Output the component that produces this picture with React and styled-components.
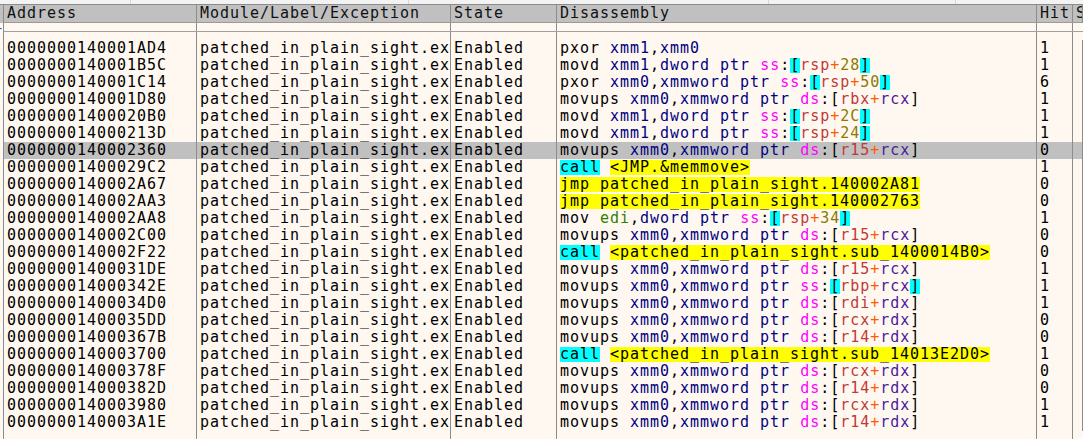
import React from 'react'
import styled, { createGlobalStyle } from 'styled-components'

const GlobalStyle = createGlobalStyle`
  html, body {
    margin: 0;
    padding: 0;
    background: #fff8f0;
    overflow: hidden;
  }
`

const rows = [
    ['0000000140001AD4', 'pxor xmm1,xmm0', '1'],
    ['0000000140001B5C', 'movd xmm1,dword ptr ss:[rsp+28]', '1'],
    ['0000000140001C14', 'pxor xmm0,xmmword ptr ss:[rsp+50]', '6'],
    ['0000000140001D80', 'movups xmm0,xmmword ptr ds:[rbx+rcx]', '1'],
    ['00000001400020B0', 'movd xmm1,dword ptr ss:[rsp+2C]', '1'],
    ['000000014000213D', 'movd xmm1,dword ptr ss:[rsp+24]', '1'],
    ['0000000140002360', 'movups xmm0,xmmword ptr ds:[r15+rcx]', '0', true],
    ['00000001400029C2', 'call <JMP.&memmove>', '1'],
    ['0000000140002A67', 'jmp patched_in_plain_sight.140002A81', '0'],
    ['0000000140002AA3', 'jmp patched_in_plain_sight.140002763', '0'],
    ['0000000140002AA8', 'mov edi,dword ptr ss:[rsp+34]', '1'],
    ['0000000140002C00', 'movups xmm0,xmmword ptr ds:[r15+rcx]', '0'],
    ['0000000140002F22', 'call <patched_in_plain_sight.sub_1400014B0>', '0'],
    ['00000001400031DE', 'movups xmm0,xmmword ptr ds:[r15+rcx]', '1'],
    ['000000014000342E', 'movups xmm0,xmmword ptr ss:[rbp+rcx]', '1'],
    ['00000001400034D0', 'movups xmm0,xmmword ptr ds:[rdi+rdx]', '1'],
    ['00000001400035DD', 'movups xmm0,xmmword ptr ds:[rcx+rdx]', '0'],
    ['000000014000367B', 'movups xmm0,xmmword ptr ds:[r14+rdx]', '0'],
    ['0000000140003700', 'call <patched_in_plain_sight.sub_14013E2D0>', '1'],
    ['000000014000378F', 'movups xmm0,xmmword ptr ds:[rcx+rdx]', '0'],
    ['000000014000382D', 'movups xmm0,xmmword ptr ds:[r14+rdx]', '0'],
    ['0000000140003980', 'movups xmm0,xmmword ptr ds:[rcx+rdx]', '1'],
    ['0000000140003A1E', 'movups xmm0,xmmword ptr ds:[r14+rdx]', '1'],
]

const colors = {
    mn: '#000000',
    reg: '#000080',
    gen: '#2f8000',
    size: '#000080',
    seg: '#ff00ff',
    punct: '#000000',
    base: '#c03838',
    plus: '#ff5a00',
    idx: '#4a1a9a',
    num: '#8c7a00',
}

// split an instruction into coloured tokens
const tokenize = (ins) => {
    const sp = ins.indexOf(' ')
    const mn = ins.slice(0, sp)
    const rest = ins.slice(sp + 1)
    if (mn === 'call') return [['call', 'cyan'], [' ', 'punct'], [rest, 'yellow']]
    if (mn === 'jmp') return [[ins, 'yellow']]
    const out = [[mn, 'mn'], [' ', 'punct']]
    const parts = rest.match(/\w+|[^\w]/g)
    let seg = ''
    let inMem = false
    let n = 0
    parts.forEach((t) => {
        if (t === 'ss' || t === 'ds') { seg = t; out.push([t, 'seg']) }
        else if (t === '[' || t === ']') {
            inMem = t === '['
            n = 0
            out.push([t, seg === 'ss' ? 'stack' : 'punct'])
        }
        else if (t === '+') out.push([t, 'plus'])
        else if (t === ',' || t === ':' || t === ' ') out.push([t, 'punct'])
        else if (inMem) {
            if (/^[0-9A-F]+$/.test(t)) out.push([t, 'num'])
            else out.push([t, n++ === 0 ? 'base' : 'idx'])
        }
        else if (t === 'edi') out.push([t, 'gen'])
        else if (t === 'dword' || t === 'xmmword' || t === 'ptr') out.push([t, 'size'])
        else out.push([t, 'reg'])
    })
    return out
}

const Disasm = ({ ins }) => (
    <>
        {tokenize(ins).map(([t, k], i) => {
            if (k === 'cyan' || k === 'stack') return <Mark key={i} $bg='#00ffff'>{t}</Mark>
            if (k === 'yellow') return <Mark key={i} $bg='#ffff00'>{t}</Mark>
            return <Tok key={i} $c={colors[k]}>{t}</Tok>
        })}
    </>
)

const App = () => {
    return (
        <Window>
            <GlobalStyle />
            <TopStrip>
                <Tick style={{ left: 130 }} />
                <Tick style={{ left: 408 }} />
                <Tick style={{ left: 768 }} />
                <Tick style={{ left: 955 }} />
            </TopStrip>
            <Frame>
                <Gutter>
                    <GutterHead />
                    <GutterMark>r</GutterMark>
                </Gutter>
                <Table>
                    <Header>
                        <HeadCell>Address</HeadCell>
                        <HeadCell>Module/Label/Exception</HeadCell>
                        <HeadCell>State</HeadCell>
                        <HeadCell>Disassembly</HeadCell>
                        <HeadCell>Hit</HeadCell>
                        <HeadCell>S</HeadCell>
                    </Header>
                    <Spacer $line />
                    <Spacer />
                    {rows.map(([addr, ins, hit, sel]) => (
                        <Row key={addr} $sel={sel}>
                            <Cell>{addr}</Cell>
                            <Cell>patched_in_plain_sight.exe</Cell>
                            <Cell>Enabled</Cell>
                            <Cell><Disasm ins={ins} /></Cell>
                            <Cell>{hit}</Cell>
                            <Cell />
                        </Row>
                    ))}
                    <Spacer />
                </Table>
            </Frame>
        </Window>
    )
}

const cols = '193px 254px 106px 480px 36px 1fr'

const Window = styled.div`
    width: 1083px;
    height: 439px;
    overflow: hidden;
    background: #fff8f0;
    font-family: "DejaVu Sans Mono", "Liberation Mono", monospace;
    font-size: 15px;
    letter-spacing: 0.97px;
    color: #000;
`

const TopStrip = styled.div`
    position: relative;
    height: 4px;
    background: #f3f3f3;
`

const Tick = styled.span`
    position: absolute;
    top: 0;
    width: 1px;
    height: 4px;
    background: #d8d8d8;
`

const Frame = styled.div`
    display: flex;
`

const Gutter = styled.div`
    width: 3px;
    flex: none;
    display: flex;
    flex-direction: column;
`

const GutterHead = styled.div`
    height: 18px;
    background: #c0c0c0;
    border-top: 1px solid #8c8c8c;
`

const GutterMark = styled.div`
    color: #1a5fb4;
    font-size: 12px;
    line-height: 12px;
    overflow: hidden;
    direction: rtl;
    margin-top: 2px;
`

const Table = styled.div`
    flex: 1;
    border-left: 1px solid #8c8c8c;
`

const Header = styled.div`
    display: grid;
    grid-template-columns: ${cols};
    height: 17px;
    line-height: 17px;
    background: #c0c0c0;
    border-top: 1px solid #8c8c8c;
    border-bottom: 1px solid #9a9a9a;
`

const HeadCell = styled.div`
    padding-left: 3px;
    border-right: 1px solid #8c8c8c;
    white-space: nowrap;
    overflow: hidden;
    color: #101010;
`

const Spacer = styled.div`
    display: grid;
    grid-template-columns: ${cols};
    height: 8px;
    border-bottom: ${(p) => (p.$line ? '1px solid #a0a0a0' : 'none')};
    background-image: linear-gradient(#8c8c8c, #8c8c8c), linear-gradient(#8c8c8c, #8c8c8c),
        linear-gradient(#8c8c8c, #8c8c8c), linear-gradient(#8c8c8c, #8c8c8c),
        linear-gradient(#8c8c8c, #8c8c8c);
    background-size: 1px 100%;
    background-repeat: no-repeat;
    background-position: 192px 0, 446px 0, 552px 0, 1032px 0, 1068px 0;
`

const Row = styled.div`
    display: grid;
    grid-template-columns: ${cols};
    height: 17px;
    line-height: 17px;
    background: ${(p) => (p.$sel ? '#c0c0c0' : 'transparent')};
`

const Cell = styled.div`
    padding-left: 3px;
    border-right: 1px solid #8c8c8c;
    white-space: nowrap;
    overflow: hidden;
`

const Tok = styled.span`
    color: ${(p) => p.$c};
`

const Mark = styled.span`
    display: inline-block;
    height: 15px;
    line-height: 15px;
    margin-top: 1px;
    vertical-align: top;
    background: ${(p) => p.$bg};
    color: #000;
`

export default App
